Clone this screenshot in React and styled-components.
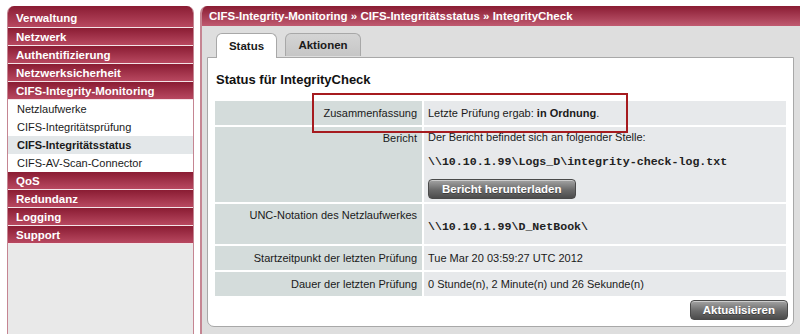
import React from 'react';
import styled, { createGlobalStyle } from 'styled-components';

const GlobalStyle = createGlobalStyle`
  html, body {
    margin: 0;
    padding: 0;
    background: #ffffff;
    overflow: hidden;
  }
  body {
    font-family: "Liberation Sans", Arial, sans-serif;
    font-size: 11px;
    color: #1a1a1a;
  }
`;

const Page = styled.div`
  display: flex;
  align-items: stretch;
  gap: 6px;
  padding: 6px 0 0 7px;
  height: 334px;
  box-sizing: border-box;
`;

const Sidebar = styled.nav`
  width: 187px;
  flex-shrink: 0;
  box-sizing: border-box;
  background: #e9e9e9;
  border-left: 1px solid #c58592;
  border-right: 1px solid #c58592;
  border-radius: 7px 7px 0 0;
  overflow: hidden;
  display: flex;
  flex-direction: column;
`;

const MenuHead = styled.div`
  height: ${p => (p.first ? 19 : 17)}px;
  padding: ${p => (p.first ? '2px' : '0')} 0 0 8px;
  box-sizing: content-box;
  display: flex;
  align-items: center;
  background: linear-gradient(#8a1c33, #b84860);
  color: #fff;
  font-weight: bold;
  font-size: 11.5px;
  border-bottom: 1px solid #f4e4e8;
`;

const SubItem = styled.div`
  height: 18px;
  display: flex;
  align-items: center;
  padding-left: 9px;
  background: ${p => (p.active ? '#e3e7e9' : '#ffffff')};
  font-weight: ${p => (p.active ? 'bold' : 'normal')};
  font-size: 11px;
  color: #1a1a1a;
`;

const Main = styled.section`
  width: 606px;
  flex-shrink: 0;
  display: flex;
  flex-direction: column;
  background: #dedede;
  border-left: 2px solid #c58592;
  border-radius: 7px 7px 0 0;
  overflow: hidden;
`;

const TitleBar = styled.div`
  height: 20px;
  display: flex;
  align-items: center;
  padding-left: 7px;
  background: linear-gradient(#8a1c33, #c05a70);
  color: #fff;
  font-weight: bold;
  font-size: 11.5px;
`;

const Tabs = styled.div`
  display: flex;
  gap: 8px;
  padding: 7px 0 0 14px;
  height: 24px;
`;

const Tab = styled.div`
  width: ${p => p.w}px;
  height: ${p => (p.active ? 25 : 23)}px;
  box-sizing: border-box;
  display: flex;
  align-items: center;
  justify-content: center;
  border: 1px solid #a8a8a8;
  border-bottom: none;
  border-radius: 6px 6px 0 0;
  background: ${p => (p.active ? '#ffffff' : 'linear-gradient(#d4d4d4, #c6c6c6)')};
  font-weight: bold;
  font-size: 11.5px;
  color: #1a1a1a;
  position: relative;
  z-index: 1;
`;

const ContentBox = styled.div`
  margin: 0 0 0 5px;
  width: 587px;
  height: 270px;
  box-sizing: border-box;
  background: #fff;
  border: 1px solid #a8a8a8;
  border-radius: 0 0 7px 7px;
  padding: 14px 0 0 7px;
  display: flex;
  flex-direction: column;
`;

const Heading = styled.h2`
  margin: 0 0 0 1px;
  font-size: 13px;
  font-weight: bold;
  color: #111;
  height: 15px;
  line-height: 15px;
`;

const TableWrap = styled.div`
  position: relative;
  margin-top: 14px;
  width: 571px;
`;

const Grid = styled.div`
  display: grid;
  grid-template-columns: 207px 1fr;
  column-gap: 2px;
  row-gap: 2px;
`;

const Label = styled.div`
  background: #d4dcdb;
  text-align: right;
  padding: ${p => (p.top ? '5px' : '0')} 5px 0 0;
  height: ${p => p.h}px;
  box-sizing: border-box;
  display: flex;
  align-items: ${p => (p.top ? 'flex-start' : 'center')};
  justify-content: flex-end;
  font-size: 11px;
  color: #1a1a1a;
`;

const Value = styled.div`
  background: #e7e9eb;
  padding: 0 0 0 4px;
  height: ${p => p.h}px;
  box-sizing: border-box;
  display: flex;
  flex-direction: column;
  justify-content: ${p => (p.stack ? 'flex-start' : 'center')};
  font-size: 11px;
  color: #1a1a1a;
`;

const Mono = styled.span`
  font-family: "Liberation Mono", "Courier New", monospace;
  font-size: 11.6px;
  font-weight: bold;
  color: #222;
`;

const Line = styled.div`
  margin-top: ${p => p.mt || 0}px;
  line-height: 14px;
`;

const Button = styled.button`
  height: 20px;
  padding: 0 ${p => p.px || 10}px;
  border: 1px solid #4a4a4a;
  border-radius: 4px;
  background: linear-gradient(#a4a4a4, #6a6a6a 55%, #4c4c4c);
  box-shadow: inset 0 1px 0 rgba(255, 255, 255, 0.45);
  color: #fff;
  font-family: "Liberation Sans", Arial, sans-serif;
  font-weight: bold;
  font-size: 11.5px;
  text-shadow: 0 1px 0 rgba(0, 0, 0, 0.35);
  cursor: pointer;
  align-self: flex-start;
`;

const Footer = styled.div`
  display: flex;
  justify-content: flex-end;
  padding: 4px 5px 0 0;
`;

const Highlight = styled.div`
  position: absolute;
  left: 97px;
  top: -8px;
  width: 316px;
  height: 40px;
  box-sizing: border-box;
  border: 2px solid #a61b1f;
  pointer-events: none;
`;

const topMenu = ['Verwaltung', 'Netzwerk', 'Authentifizierung', 'Netzwerksicherheit', 'CIFS-Integrity-Monitoring'];
const subMenu = ['Netzlaufwerke', 'CIFS-Integritätsprüfung', 'CIFS-Integritätsstatus', 'CIFS-AV-Scan-Connector'];
const bottomMenu = ['QoS', 'Redundanz', 'Logging', 'Support'];

function App() {
  return (
    <>
      <GlobalStyle />
      <Page>
        <Sidebar>
          {topMenu.map((item, i) => (
            <MenuHead key={item} first={i === 0}>{item}</MenuHead>
          ))}
          {subMenu.map(item => (
            <SubItem key={item} active={item === 'CIFS-Integritätsstatus'}>{item}</SubItem>
          ))}
          {bottomMenu.map(item => (
            <MenuHead key={item}>{item}</MenuHead>
          ))}
        </Sidebar>

        <Main>
          <TitleBar>CIFS-Integrity-Monitoring » CIFS-Integritätsstatus » IntegrityCheck</TitleBar>
          <Tabs>
            <Tab w={61} active>Status</Tab>
            <Tab w={76}>Aktionen</Tab>
          </Tabs>
          <ContentBox>
            <Heading>Status für IntegrityCheck</Heading>
            <TableWrap>
              <Grid>
                <Label h={24}>Zusammenfassung</Label>
                <Value h={24}>
                  <span>Letzte Prüfung ergab: <b>in Ordnung</b>.</span>
                </Value>

                <Label h={75} top>Bericht</Label>
                <Value h={75} stack>
                  <Line mt={3}>Der Bericht befindet sich an folgender Stelle:</Line>
                  <Line mt={10}><Mono>\\10.10.1.99\Logs_D\integrity-check-log.txt</Mono></Line>
                  <Line mt={10}>
                    <Button px={13}>Bericht herunterladen</Button>
                  </Line>
                </Value>

                <Label h={40} top>UNC-Notation des Netzlaufwerkes</Label>
                <Value h={40} stack>
                  <Line mt={15}><Mono>\\10.10.1.99\D_NetBook\</Mono></Line>
                </Value>

                <Label h={24}>Startzeitpunkt der letzten Prüfung</Label>
                <Value h={24}>Tue Mar 20 03:59:27 UTC 2012</Value>

                <Label h={24}>Dauer der letzten Prüfung</Label>
                <Value h={24}>0 Stunde(n), 2 Minute(n) und 26 Sekunde(n)</Value>
              </Grid>
              <Highlight />
            </TableWrap>
            <Footer>
              <Button px={12}>Aktualisieren</Button>
            </Footer>
          </ContentBox>
        </Main>
      </Page>
    </>
  );
}

export default App;
